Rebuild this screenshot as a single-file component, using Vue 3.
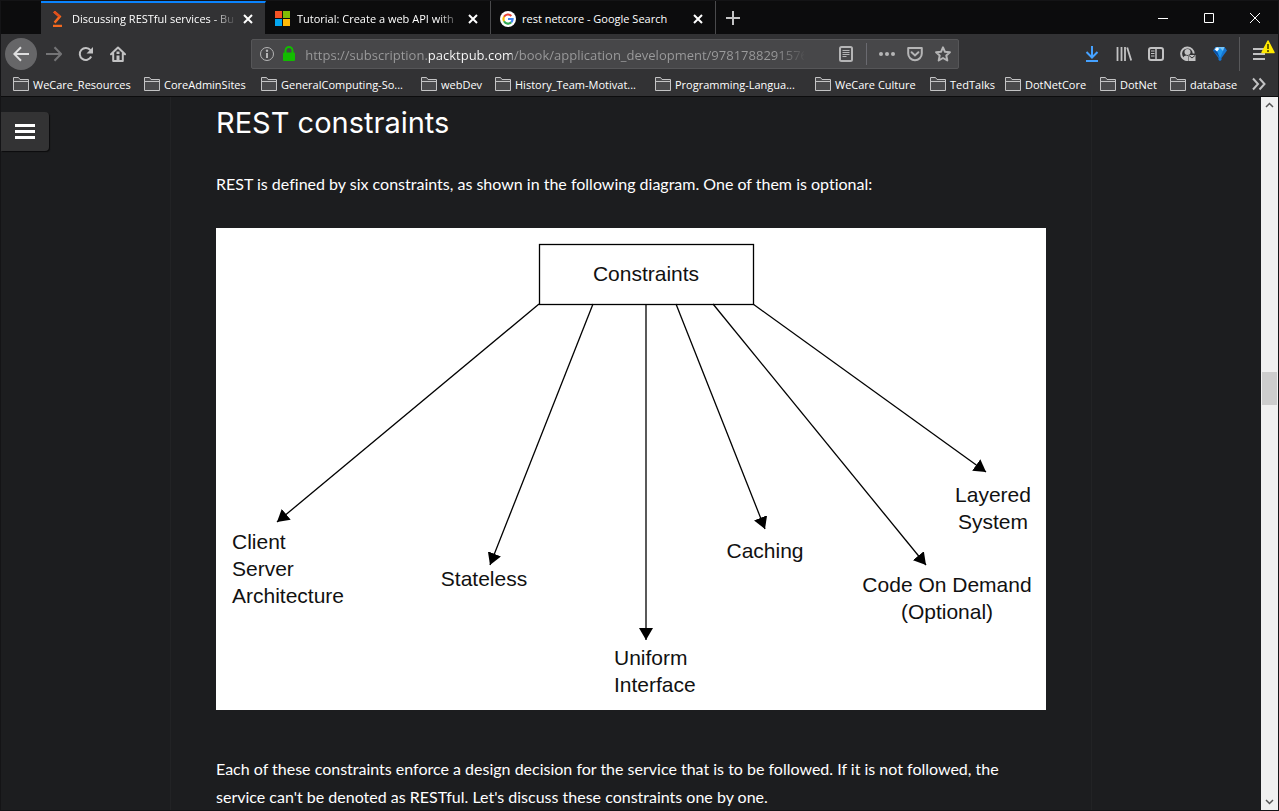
<script setup>
import { ref } from 'vue'

const address = ref('https://subscription.packtpub.com/book/application_development/9781788291576')
const bookmarks = [
  'WeCare_Resources', 'CoreAdminSites', 'GeneralComputing-So...', 'webDev',
  'History_Team-Motivat...', 'Programming-Langua...', 'WeCare Culture',
  'TedTalks', 'DotNetCore', 'DotNet', 'database',
]
const tabs = [
  { title: 'Discussing RESTful services - Bu', icon: 'packt', active: true },
  { title: 'Tutorial: Create a web API with', icon: 'microsoft', active: false },
  { title: 'rest netcore - Google Search', icon: 'google', active: false },
]
const arrows = [
  { from: [323, 76], to: [61, 294] },
  { from: [377, 76], to: [274, 337] },
  { from: [430, 76], to: [430, 412] },
  { from: [460, 76], to: [549, 301] },
  { from: [497, 76], to: [710, 337] },
  { from: [537, 76], to: [770, 244] },
]
const labels = [
  { x: 430, y: 53, anchor: 'middle', lines: ['Constraints'] },
  { x: 16, y: 321, anchor: 'start', lines: ['Client', 'Server', 'Architecture'] },
  { x: 268, y: 358, anchor: 'middle', lines: ['Stateless'] },
  { x: 398, y: 437, anchor: 'start', lines: ['Uniform', 'Interface'] },
  { x: 549, y: 330, anchor: 'middle', lines: ['Caching'] },
  { x: 731, y: 364, anchor: 'middle', lines: ['Code On Demand', '(Optional)'] },
  { x: 777, y: 274, anchor: 'middle', lines: ['Layered', 'System'] },
]
</script>

<template>
  <div class="window">
    <header class="chrome">
      <div class="tabbar">
        <div class="tabs" role="tablist">
          <div v-for="tab in tabs" :key="tab.title" class="tab" :class="{ active: tab.active }" role="tab" :aria-selected="tab.active">
            <svg v-if="tab.icon === 'packt'" class="icon" viewBox="0 0 16 16">
              <path d="M4 .6 9.8 5.6 4.6 11.6M3 15h9" fill="none" stroke="#f4691f" stroke-width="2.4" />
              <path d="M4 .6 9.8 5.6" fill="none" stroke="#e04f1c" stroke-width="2.4" />
            </svg>
            <svg v-else-if="tab.icon === 'microsoft'" class="icon" viewBox="0 0 16 16">
              <path d="M0 0h7v7H0z" fill="#f35325" /><path d="M8 0h7v7H8z" fill="#81bc06" />
              <path d="M0 8h7v7H0z" fill="#05a6f0" /><path d="M8 8h7v7H8z" fill="#ffba08" />
            </svg>
            <svg v-else class="icon" viewBox="0 0 16 16">
              <circle cx="8" cy="8" r="8" fill="#fff" />
              <g fill="none" stroke-width="2.2">
                <path d="M11.3 4.9A4.6 4.6 0 0 0 4 5.8" stroke="#ea4335" />
                <path d="M4 5.8a4.6 4.6 0 0 0 0 4.5" stroke="#fbbc05" />
                <path d="M4 10.3a4.6 4.6 0 0 0 7.3.9" stroke="#34a853" />
                <path d="M11.3 11.2A4.6 4.6 0 0 0 12.6 8H8" stroke="#4285f4" />
              </g>
            </svg>
            <span class="tab-title" :class="{ faded: tab.icon !== 'google' }">{{ tab.title }}</span>
            <button class="tab-close" aria-label="Close tab">
              <svg viewBox="0 0 10 10"><path d="m1 1 8 8M9 1 1 9" /></svg>
            </button>
          </div>
        </div>
        <button class="new-tab" aria-label="New tab">
          <svg viewBox="0 0 14 14"><path d="M7 0v14M0 7h14" /></svg>
        </button>
        <div class="controls">
          <button aria-label="Minimize"><svg viewBox="0 0 10 10"><path d="M0 5.5h10" /></svg></button>
          <button aria-label="Maximize"><svg viewBox="0 0 10 10"><path d="M.5.5h9v9h-9z" /></svg></button>
          <button aria-label="Close window"><svg viewBox="0 0 10 10"><path d="m0 0 10 10M10 0 0 10" /></svg></button>
        </div>
      </div>

      <nav class="toolbar" aria-label="Navigation">
        <button class="tool back" aria-label="Back">
          <svg class="icon" viewBox="0 0 16 16"><path d="M16 8H1.5M8 1.2 1.3 8 8 14.8" /></svg>
        </button>
        <button class="tool forward" aria-label="Forward">
          <svg class="icon" viewBox="0 0 16 16"><path d="M0 8h14.500M8.500 1.200 15 8l-6.500 6.800" /></svg>
        </button>
        <button class="tool" aria-label="Reload">
          <svg class="icon" viewBox="0 0 16 16"><path d="M13.200 10.500A6 6 0 1 1 12.500 4.200" /><path class="solid" d="M15 1v6.500H8.500z" /></svg>
        </button>
        <button class="tool" aria-label="Home">
          <svg class="icon" viewBox="0 0 16 16"><path d="M1 8.300 8 1.500l7 6.800M3.200 7.500V15h9.600V7.500" stroke-linejoin="round" stroke-linecap="round" /><path class="solid" d="M6.500 9.500h3V15h-3zM6.500 5.500h3v2.500h-3z" /></svg>
        </button>
        <div class="spacer"></div>
        <div class="urlbar">
          <button class="small-tool" aria-label="Site information">
            <svg viewBox="0 0 16 16" class="thin"><circle cx="8" cy="8" r="6.500" /><path d="M8 7v5" stroke-width="2" /><circle class="solid" cx="8" cy="4.800" r="1.200" /></svg>
          </button>
          <button class="small-tool lock" aria-label="Secure connection">
            <svg viewBox="0 0 16 16"><path d="M4.500 7V4.500a3.500 3.500 0 0 1 7 0V7" /><rect class="solid" x="2" y="6.500" width="12" height="8.500" rx="1" /></svg>
          </button>
          <input v-model="address" class="address" type="text" aria-label="Address" spellcheck="false" />
          <button class="small-tool reader" aria-label="Reader view">
            <svg viewBox="0 0 16 16"><rect x="2" y="1" width="12" height="14" rx="1.500" /><path d="M4.500 4.500h7M4.500 6.500h7M4.500 8.500h7M4.500 10.500h4" stroke-width="1" /></svg>
          </button>
          <span class="divider"></span>
          <button class="small-tool" aria-label="Page actions">
            <svg viewBox="0 0 16 16"><circle class="solid" cx="2" cy="8" r="2" /><circle class="solid" cx="8" cy="8" r="2" /><circle class="solid" cx="14" cy="8" r="2" /></svg>
          </button>
          <button class="small-tool" aria-label="Save to Pocket">
            <svg viewBox="0 0 16 16"><path d="M1.200 2h13.600v5.500a6.800 6.800 0 0 1-13.600 0z" stroke-linejoin="round" /><path d="M4.600 6.300 8 9.500l3.400-3.200" stroke-linecap="round" /></svg>
          </button>
          <button class="small-tool" aria-label="Bookmark this page">
            <svg viewBox="0 0 16 16"><path d="m8 1.300 2 4.500 4.900.5-3.600 3.300 1 4.900L8 12l-4.300 2.500 1-4.900L1.100 6.300 6 5.800z" stroke-linejoin="round" /></svg>
          </button>
        </div>
        <div class="spacer"></div>
        <button class="tool download" aria-label="Downloads">
          <svg class="icon" viewBox="0 0 16 16"><path d="M8 0v11M2.500 6 8 11.500 13.500 6M2 15h12" /></svg>
        </button>
        <button class="tool" aria-label="Library">
          <svg class="icon" viewBox="0 0 16 16"><path d="M1.500 1v14M5.500 1v14M9 1v14M11.200 1.500 15.200 14.500" stroke-width="1.800" /></svg>
        </button>
        <button class="tool" aria-label="Sidebars">
          <svg class="icon" viewBox="0 0 16 16"><rect x="1" y="2" width="14" height="12" rx="2" /><path d="M8 2v12" stroke-width="1.500" /><path d="M3 5h3.500M3 7.500h3.500M3 10h3.500" stroke-width="1" /></svg>
        </button>
        <button class="tool" aria-label="Account">
          <svg class="icon" viewBox="0 0 16 16"><path d="M7.500 14A6.300 6.300 0 1 1 13.700 7.500" /><circle class="solid" cx="7.500" cy="6" r="3" /><path class="solid" d="M3 12c1-3 4-3 5-2v5c-2 .3-4-.8-5-3z" /><path class="solid" d="M8.500 9h7v6h-7z" /><path d="m9 9.500 3 2.500 3-2.500" stroke="#323234" stroke-width="1" /></svg>
        </button>
        <button class="tool" aria-label="Extension">
          <svg class="icon gem" viewBox="0 0 16 16">
            <path d="M3.500 1h9L15 4.500 9.500 12v2l-1.500 1-1.500-1v-2L1 4.500z" fill="#1675d1" />
            <path d="M3.500 1h9l-1.500 4H5z" fill="#75c4f9" /><path d="m1 4.500 4 .5 3 7z" fill="#0b51a6" />
            <path d="m5 5 3-3 3 3-3 7z" fill="#1f96ee" /><path d="m2.500 3 3-1.500 1.500 1.500-2 2.500z" fill="#fff" />
          </svg>
        </button>
        <span class="menu-divider"></span>
        <button class="menu" aria-label="Open menu">
          <svg class="icon" viewBox="0 0 16 16"><path d="M2 3h12M2 8h12M2 13h12" /></svg>
          <svg class="warning" viewBox="0 0 14 14"><path d="M7 1 13 12.500H1z" fill="#ffe900" stroke="#ffe900" stroke-width="1.500" stroke-linejoin="round" /><path d="M7 4v5M7 10v2" stroke="#3e3800" stroke-width="1.500" /></svg>
        </button>
      </nav>

      <nav class="bookmarks" aria-label="Bookmarks">
        <a v-for="name in bookmarks" :key="name" href="#">
          <svg class="icon" viewBox="0 0 16 16"><path d="M.5 14.500v-13h5l1.500 2h8.500v11z" fill="#4a4a4c" stroke="#c4c4c5" /><path d="M.5 5.500h15" stroke="#c4c4c5" /></svg>
          <span>{{ name }}</span>
        </a>
        <button aria-label="More bookmarks">
          <svg viewBox="0 0 14 14"><path d="m1 1.500 5 5.500-5 5.500M7.500 1.500l5 5.500-5 5.500" /></svg>
        </button>
      </nav>
    </header>

    <div class="viewport">
      <main class="page">
        <button class="contents" aria-label="Table of contents">
          <svg viewBox="0 0 20 16"><path d="M0 1.500h20M0 7.500h20M0 13.500h20" /></svg>
        </button>
        <article class="article">
          <h1>REST constraints</h1>
          <p>REST is defined by six constraints, as shown in the following diagram. One of them is optional:</p>
          <svg class="diagram" viewBox="0 0 830 482" role="img" aria-label="Constraints diagram">
            <defs>
              <marker id="head" viewBox="0 0 12 14" refX="12" refY="7" markerWidth="12" markerHeight="14" markerUnits="userSpaceOnUse" orient="auto">
                <path d="M0 0 12 7 0 14z" />
              </marker>
            </defs>
            <rect x="323.500" y="16.500" width="214" height="60" class="line" />
            <line
              v-for="(arrow, i) in arrows" :key="i" class="line"
              :x1="arrow.from[0]" :y1="arrow.from[1]" :x2="arrow.to[0]" :y2="arrow.to[1]"
              marker-end="url(#head)"
            />
            <text v-for="label in labels" :key="label.lines[0]" :text-anchor="label.anchor">
              <tspan v-for="(line, i) in label.lines" :key="line" :x="label.x" :y="label.y + i * 27">{{ line }}</tspan>
            </text>
          </svg>
          <p>Each of these constraints enforce a design decision for the service that is to be followed. If it is not followed, the service can't be denoted as RESTful. Let's discuss these constraints one by one.</p>
        </article>
      </main>
      <div class="scrollbar" aria-hidden="true">
        <svg viewBox="0 0 17 17"><path d="m5 10 3.500-3.500L12 10" /></svg>
        <div class="before"></div>
        <div class="thumb"></div>
        <div class="after"></div>
        <svg viewBox="0 0 17 17"><path d="M5 7l3.500 3.500L12 7" /></svg>
      </div>
    </div>
  </div>
</template>

<style>
body { background: #1c1d1f; }
</style>

<style scoped>
.window {
  box-sizing: border-box;
  height: 100vh;
  display: flex;
  flex-direction: column;
  overflow: hidden;
  border: 1px solid #141416;
  background: #1c1d1f;
  color: #fff;
  font-family: "Open Sans", "Noto Sans", sans-serif;
  font-size: 11px;
}
button {
  border: 0;
  padding: 0;
  background: none;
  color: inherit;
  font: inherit;
  display: flex;
  align-items: center;
  justify-content: center;
  flex: none;
}
svg { display: block; flex: none; fill: none; stroke: currentColor; stroke-width: 2; }
.icon { width: 16px; height: 16px; }
.solid { fill: currentColor; stroke: none; }
.chrome { flex: none; background: #323234; border-bottom: 1px solid #0c0c0d; }

.tabbar { display: flex; height: 33px; background: #0c0c0d; padding-left: 40px; }
.tabs { display: flex; flex: 0 1 675px; min-width: 0; }
.tab {
  box-sizing: border-box;
  flex: 1 1 0;
  min-width: 0;
  display: flex;
  align-items: center;
  gap: 6px;
  padding: 2px 12px 0 9px;
  border-right: 1px solid #4a4a4c;
}
.tab .icon { stroke: none; }
.tab.active { background: #323234; border-top: 2px solid #0a84ff; border-right-color: #0c0c0d; padding-top: 0; }
.tab-title {
  flex: 1;
  min-width: 0;
  overflow: hidden;
  white-space: nowrap;
}
.faded {
  -webkit-mask-image: linear-gradient(to left, transparent, #000 24px);
  mask-image: linear-gradient(to left, transparent, #000 24px);
}
.tab-close svg { width: 10px; height: 10px; }
.new-tab { width: 34px; color: #c4c4c5; }
.new-tab svg { width: 14px; height: 14px; }
.controls { display: flex; margin-left: auto; }
.controls button { width: 46px; }
.controls svg { width: 10px; height: 10px; stroke-width: 1; }

.toolbar { display: flex; align-items: center; height: 40px; padding-left: 4px; color: #c2c2c3; }
.tool { width: 32px; height: 32px; }
.tool.back { margin-right: 1px; border-radius: 50%; background: #666668; color: #dededf; }
.tool.forward { color: #747476; }
.tool.download { color: #45a1ff; }
.gem { stroke: none; }
.spacer { flex: 1; }
.urlbar {
  box-sizing: border-box;
  flex: 6;
  min-width: 0;
  height: 30px;
  display: flex;
  align-items: center;
  padding: 0 1px;
  border: 1px solid #565658;
  border-radius: 2px;
  background: #474749;
  color: #b5b5b6;
}
.small-tool { width: 28px; height: 28px; }
.small-tool svg { width: 16px; height: 16px; }
.small-tool .thin { stroke-width: 1; }
.lock { width: 20px; color: #12bc00; justify-content: flex-start; }
.address {
  flex: 1;
  min-width: 0;
  margin: 0 28px 0 4px;
  border: 0;
  padding: 2px 0 0;
  outline: 0;
  color: transparent;
  background: linear-gradient(to right, #9b9b9c 122px, #fff 122px, #fff 207px, #9b9b9c 207px, #9b9b9c 470px, transparent 502px);
  -webkit-background-clip: text;
  background-clip: text;
  font: 13px "Open Sans", "Noto Sans", sans-serif;
}
.divider { width: 1px; height: 22px; margin: 0 6px; background: #6a6a70; }
.menu-divider { width: 1px; height: 34px; margin-left: 3px; background: #58585a; }
.menu { position: relative; width: 38px; height: 32px; }
.warning { position: absolute; top: 2px; right: 3px; width: 14px; height: 14px; stroke: none; }

.bookmarks {
  display: grid;
  grid-template-columns: 131fr 117fr 160fr 74fr 160fr 160fr 115fr 75fr 95fr 70fr 82fr 14px;
  align-items: center;
  height: 20px;
  padding: 0 12px 2px;
}
.bookmarks a {
  min-width: 0;
  display: flex;
  align-items: center;
  gap: 4px;
  color: inherit;
  text-decoration: none;
  white-space: nowrap;
}
.bookmarks .icon { stroke-width: 1; }
.bookmarks button { color: #c2c2c3; }
.bookmarks button svg { width: 14px; height: 14px; }

.viewport { flex: 1; min-height: 0; display: flex; }
.page { position: relative; flex: 1; min-width: 0; overflow: hidden; }
.contents {
  position: absolute;
  top: 15px;
  left: 0;
  width: 48px;
  height: 39px;
  border-radius: 0 4px 4px 0;
  background: #333334;
  box-shadow: 1px 1px 1px #0c0c0d;
}
.contents svg { width: 20px; height: 16px; stroke-width: 3; }
.article {
  box-sizing: border-box;
  max-width: 922px;
  margin: 0 auto;
  padding: 8px 45px;
  border: solid #222325;
  border-width: 0 1px;
  font-family: Lato, "Open Sans", sans-serif;
  font-size: 16px;
  line-height: 28px;
  font-variant-ligatures: none;
}
h1 { margin: 0; font: 400 29px/36px Inter, sans-serif; }
p { margin: 29px 0 30px; }
.diagram { width: 100%; height: auto; background: #fff; margin-bottom: 45px; stroke: none; }
.diagram text { font: 21px "Liberation Sans", Arial, sans-serif; fill: #111; }
.diagram marker path { fill: #000; stroke: none; }
.line { stroke: #000; stroke-width: 1.3; fill: none; }

.scrollbar { flex: none; width: 17px; display: flex; flex-direction: column; background: #f0f0f0; color: #555; }
.scrollbar svg { width: 17px; height: 17px; stroke-width: 1.500; }
.before { flex: 258; }
.after { flex: 389; }
.thumb { height: 33px; margin: 0 1px; background: #cdcdcd; }
</style>
